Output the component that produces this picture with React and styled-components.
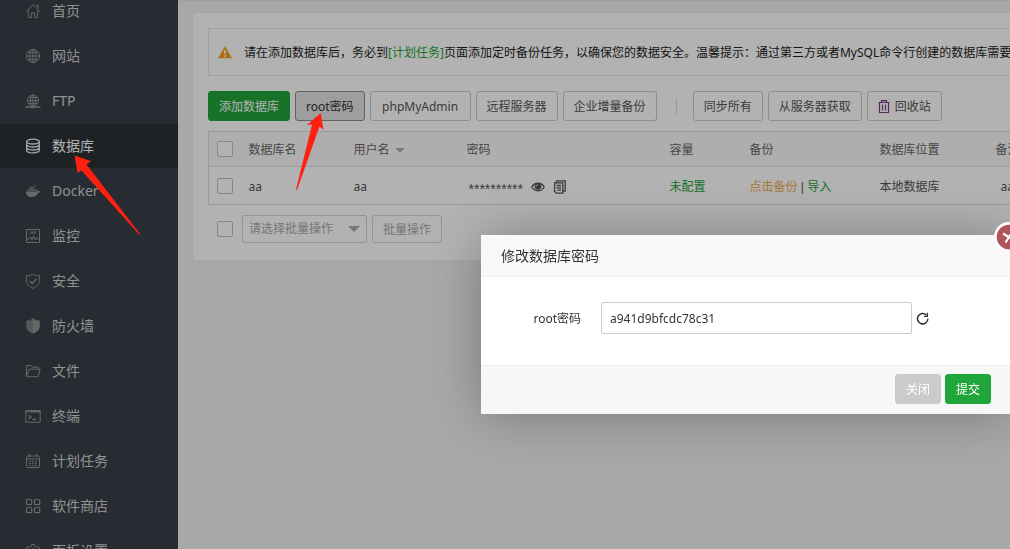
import React from 'react'
import styled, { createGlobalStyle, css } from 'styled-components'

const GlobalStyle = createGlobalStyle`
  * {
    box-sizing: border-box;
  }
  html, body, #root {
    height: 100%;
    margin: 0;
  }
  body {
    overflow: hidden;
    background: #f1f1f1;
    color: #555;
    font: 12px/18px "Noto Sans", "Noto Sans CJK SC", sans-serif;
  }
  button, input, select {
    font: inherit;
    color: inherit;
  }
  a {
    color: #20a53a;
    text-decoration: none;
  }
`

const Layout = styled.div`
  display: flex;
  height: 100%;
  overflow: hidden;
`

const Sidebar = styled.nav`
  flex: none;
  width: 178px;
  height: 100%;
  overflow: hidden;
  background: #393f48;
`

const Menu = styled.ul`
  display: flex;
  flex-direction: column;
  gap: 1px;
  margin: -11px 0 0;
  padding: 0;
  list-style: none;
`

const MenuLink = styled.a`
  display: flex;
  align-items: center;
  gap: 11px;
  height: 44px;
  padding-left: 25px;
  font-size: 14px;
  color: ${p => (p.$active ? '#fff' : '#d0d0d0')};
  background: ${p => (p.$active ? '#2d3136' : 'transparent')};
  svg {
    flex: none;
    width: 16px;
    height: 16px;
    color: ${p => (p.$active ? '#f0f0f0' : '#949494')};
  }
`

const Main = styled.main`
  flex: 1;
  min-width: 0;
  padding: 13px 15px;
  overflow: hidden;
  box-shadow: inset 0 1px 1px #e4e4e4;
`

const Panel = styled.section`
  width: 100%;
  min-width: 960px;
  padding: 15px;
  border-radius: 4px;
  background: #fff;
  box-shadow: 0 0 2px #e4e4e4;
`

const Notice = styled.p`
  display: flex;
  align-items: center;
  gap: 12px;
  height: 48px;
  margin: 0 0 15px;
  padding-left: 9px;
  border: 1px solid #eaeaea;
  color: #222;
  white-space: nowrap;
  span {
    padding-top: 2px;
  }
`

const Toolbar = styled.div`
  display: flex;
  align-items: center;
  gap: 5px;
  margin-bottom: 10px;
`

const Divider = styled.span`
  width: 1px;
  height: 16px;
  margin: 0 11px 0 14px;
  background: #ddd;
`

const variants = {
  normal: css`
    border-color: #ccc;
    background: #fff;
    color: #555;
  `,
  pressed: css`
    border-color: #8c8c8c;
    background: #e2e2e2;
    color: #333;
  `,
  primary: css`
    border-color: #20a53a;
    background: #20a53a;
    color: #fff;
  `,
  muted: css`
    border-color: #cbcbcb;
    background: #cbcbcb;
    color: #fff;
  `,
  disabled: css`
    border-color: #d4d4d4;
    background: #fff;
    color: #aaa;
  `,
}

const Button = styled.button`
  display: inline-flex;
  flex: none;
  align-items: center;
  justify-content: center;
  gap: 5px;
  min-width: ${p => (p.$wide ? '101px' : 0)};
  height: ${p => (p.$small ? 28 : 30)}px;
  padding: 2px 10px 0;
  border: 1px solid;
  border-radius: 3px;
  white-space: nowrap;
  ${p => variants[p.$variant || 'normal']}
`

const Table = styled.table`
  width: 100%;
  table-layout: fixed;
  border-collapse: collapse;
  border: 1px solid #ddd;
  th, td {
    padding: 2px 8px 0;
    font-weight: normal;
    text-align: left;
    white-space: nowrap;
    border-bottom: 1px solid #ddd;
  }
  th:first-child, td:first-child {
    padding-top: 0;
  }
  th {
    height: 35px;
    background: #f9f9f9;
    color: #666;
  }
  td {
    height: 38px;
  }
`

const Check = styled.input.attrs({ type: 'checkbox' })`
  display: block;
  flex: none;
  width: 16px;
  height: 16px;
  margin: 0;
  appearance: none;
  border: 1px solid #c0c0c0;
  border-radius: 2px;
  background: #fff;
`

const Caret = styled.span`
  display: inline-block;
  margin-left: 5px;
  vertical-align: middle;
  border: 5px solid transparent;
  border-top-color: #b4b4b4;
  border-bottom: 0;
`

const Password = styled.span`
  display: flex;
  align-items: center;
  gap: 8px;
  padding-left: 2px;
`

const Stars = styled.span`
  padding-top: 5px;
  font-family: "Liberation Sans", sans-serif;
  font-size: 14px;
`

const IconButton = styled.button`
  display: inline-flex;
  padding: 0;
  border: 0;
  background: none;
`

const BackupLink = styled.a`
  color: #f0ad4e;
`

const Separator = styled.span`
  font-family: "Liberation Sans", sans-serif;
`

const Remark = styled.span`
  padding-left: 5px;
`

const Batch = styled.div`
  display: flex;
  align-items: center;
  gap: 5px;
  padding: 10px 0 2px 9px;
`

const SelectBox = styled.div`
  position: relative;
  margin-left: 4px;
  &::after {
    content: '';
    position: absolute;
    top: 11px;
    right: 7px;
    border: 6px solid transparent;
    border-top-color: #aaa;
    border-bottom: 0;
    pointer-events: none;
  }
  select {
    width: 125px;
    height: 28px;
    padding: 0 6px;
    appearance: none;
    border: 1px solid #d4d4d4;
    border-radius: 2px;
    background: #fff;
    color: #aaa;
  }
`

const Shade = styled.div`
  position: fixed;
  inset: 0;
  background: rgba(0, 0, 0, 0.3);
`

const Dialog = styled.div`
  position: fixed;
  top: 235px;
  left: 481px;
  width: 530px;
  background: #fff;
  color: #333;
  box-shadow: 1px 1px 50px rgba(0, 0, 0, 0.3);
`

const DialogTitle = styled.h2`
  height: 42px;
  margin: 0;
  padding: 0 20px;
  border-bottom: 1px solid #eee;
  background: #f8f8f8;
  font-size: 14px;
  font-weight: normal;
  line-height: 42px;
`

const Field = styled.div`
  display: flex;
  align-items: center;
  padding: 25px 82px 31px 0;
  label {
    width: 100px;
    margin-right: 20px;
    padding-top: 2px;
    text-align: right;
  }
  input {
    flex: 1;
    min-width: 0;
    height: 32px;
    margin-right: 4px;
    padding: 0 8px;
    border: 1px solid #ccc;
    border-radius: 2px;
    background: #fff;
  }
`

const DialogFooter = styled.div`
  display: flex;
  justify-content: flex-end;
  gap: 4px;
  padding: 8px 20px 10px;
  border-top: 1px solid #edf1f2;
  background: #f6f8f8;
`

const CloseButton = styled.button`
  position: absolute;
  top: -13px;
  right: -13px;
  display: flex;
  width: 30px;
  height: 30px;
  padding: 0;
  border: 0;
  border-radius: 50%;
  background: #fff;
`

const Arrows = styled.svg`
  position: fixed;
  top: 0;
  left: 0;
  fill: #ff2012;
  pointer-events: none;
`

const Icon = ({ children }) => (
  <svg viewBox="0 0 16 16" fill="none" stroke="currentColor" strokeWidth="1" aria-hidden="true">
    {children}
  </svg>
)

const icons = {
  home: (
    <Icon>
      <path d="M1 8.6 8 1.8 15 8.6M3.3 7.2v7.3h3V10h3.4v4.5h3V7.2M11.2 2.3h2v3.2" />
    </Icon>
  ),
  site: (
    <Icon>
      <circle cx="8" cy="8" r="6.5" />
      <ellipse cx="8" cy="8" rx="3.2" ry="6.5" />
      <path d="M8 1.5v13M1.5 8h13M2.6 4.6h10.8M2.6 11.4h10.8" />
    </Icon>
  ),
  ftp: (
    <Icon>
      <circle cx="8" cy="7.5" r="5.5" />
      <ellipse cx="8" cy="7.5" rx="2.6" ry="5.5" />
      <path d="M8 2v11M2.5 7.5h11M3.5 4.6h9M3.5 10.4h9" />
      <path d="M.5 14h15M6 14.5h4" strokeWidth="1.4" />
    </Icon>
  ),
  database: (
    <Icon>
      <g strokeWidth="1.3">
        <ellipse cx="8" cy="3.6" rx="6.3" ry="2.4" />
        <path d="M1.7 3.6v8.8c0 1.3 2.8 2.4 6.3 2.4s6.3-1.1 6.3-2.4V3.6M1.7 6.6C1.7 7.9 4.5 9 8 9s6.300-1.100 6.300-2.400M1.700 9.600C1.700 10.900 4.500 12 8 12s6.300-1.100 6.300-2.400" />
      </g>
    </Icon>
  ),
  docker: (
    <Icon>
      <g fill="currentColor" stroke="none">
        <path d="M1 8.500h10.500c.6-.3.800-1 .600-2 .8.400 1.200 1 1.200 1.700.8-.2 1.600-.1 2.400.2-.5 1-1.400 1.300-2.500 1.300C12 12.500 10 14 6.500 14 3 14 1 12.200 1 8.500z" />
        <path d="M2.500 6H4.300v1.800H2.500zM4.900 6h1.800v1.800H4.900zM7.300 6h1.800v1.800H7.300zM9.700 6h1.600v1.800H9.700zM4.900 3.800h1.800v1.600H4.900zM7.300 3.800h1.800v1.600H7.300zM9 2.200h1.400v1.200H9z" />
      </g>
    </Icon>
  ),
  monitor: (
    <Icon>
      <path d="M1.500 1.500h13v13h-13zM1.500 11h2.700l1.300-2.200 1.600 3.400L8.700 7.800l1.600 4.200 1.500-2.500.8 1.500h1.900" />
      <path d="M5 4.500h6" strokeWidth="2.500" opacity=".6" />
    </Icon>
  ),
  safe: (
    <Icon>
      <path d="M8 .9c1.700 1.200 4 1.800 6.400 1.800v5.600c0 3-2.600 5.300-6.400 7-3.800-1.700-6.400-4-6.400-7V2.700C4 2.700 6.300 2.100 8 .9z" />
      <path d="m4.600 7.900 2.600 2.500 4.300-4.700" strokeWidth="1.400" />
    </Icon>
  ),
  firewall: (
    <Icon>
      <g fill="currentColor" stroke="none">
        <path d="M8 .5v15.200C4 14 1.200 11.600 1.200 8V2.800h1.500V2h1.500v.8h1.500v-1.500h1.300V.5z" opacity=".75" />
        <path d="M8 .5v15.200c4-1.700 6.800-4.100 6.800-7.700V2.800h-1.500V2h-1.500v.8h-1.500v-1.500H9V.5z" />
      </g>
    </Icon>
  ),
  folder: (
    <Icon>
      <path d="M1.500 13.700V2.500h4.300l1.400 1.700h6.300v2M1.500 13.700h11.500l2.200-7.500H4.200z" strokeLinejoin="round" />
    </Icon>
  ),
  terminal: (
    <Icon>
      <path d="M.8 2.500h14.400v11.700H.8z" />
      <path d="M3.500 7.200l2.500 1.900-2.500 1.900M7.300 11.300h3.700" strokeWidth="1.300" />
      <path d="M.8 3.300h14.400" strokeWidth="2.400" strokeDasharray="1.500 .8 1.200 .8 20" />
    </Icon>
  ),
  calendar: (
    <Icon>
      <rect x="1.500" y="3" width="13" height="11.500" rx="1.500" />
      <path d="M1.500 6h13M4.500 1v3M11.500 1v3" />
      <path d="M4 8.500h8.500M4 10.500h8.500M4 12.500h8.500" strokeDasharray="1.800 1.200" />
    </Icon>
  ),
  store: (
    <Icon>
      <g strokeWidth="1.200">
        <rect x="1.500" y="1.500" width="5.200" height="5.200" rx="1" />
        <rect x="9.500" y="1.500" width="5.200" height="5.200" rx="1" />
        <rect x="1.500" y="9.500" width="5.200" height="5.200" rx="1" />
        <rect x="9.500" y="9.500" width="5.200" height="5.200" rx="1" />
      </g>
    </Icon>
  ),
  settings: (
    <Icon>
      <path d="M6.600 1.500h2.800l.5 2 1.500.8 2-.6 1.300 2.400-1.400 1.500v1.400l1.400 1.500-1.300 2.400-2-.6-1.500.8-.5 2H6.600l-.5-2-1.500-.8-2 .6-1.300-2.400L2.700 9V7.600L1.300 6.100l1.300-2.400 2 .6 1.500-.8z" />
      <circle cx="8" cy="8.200" r="2.400" />
    </Icon>
  ),
}

const menu = [
  ['home', '首页'],
  ['site', '网站'],
  ['ftp', 'FTP'],
  ['database', '数据库'],
  ['docker', 'Docker'],
  ['monitor', '监控'],
  ['safe', '安全'],
  ['firewall', '防火墙'],
  ['folder', '文件'],
  ['terminal', '终端'],
  ['calendar', '计划任务'],
  ['store', '软件商店'],
  ['settings', '面板设置'],
]

const columns = [32, 105, 113, 203, 80, 130, 116, null]

const Databases = () => (
  <Panel>
    <Notice>
      <svg width="14" height="13" viewBox="0 0 14 13" aria-hidden="true">
        <path d="M7 0 14 12.200H0z" fill="#f5a119" />
        <path d="M6 4.200h2L7.700 8.300H6.300zM6.100 9.200h1.800v1.700H6.100z" fill="#fff" />
      </svg>
      <span>
        请在添加数据库后，务必到<a href="#crontab">[计划任务]</a>页面添加定时备份任务，以确保您的数据安全。温馨提示：通过第三方或者MySQL命令行创建的数据库需要
      </span>
    </Notice>
    <Toolbar>
      <Button $variant="primary">添加数据库</Button>
      <Button $variant="pressed">root密码</Button>
      <Button $wide>phpMyAdmin</Button>
      <Button>远程服务器</Button>
      <Button>企业增量备份</Button>
      <Divider />
      <Button>同步所有</Button>
      <Button>从服务器获取</Button>
      <Button>
        <svg width="12" height="14" viewBox="0 0 12 14" fill="none" stroke="#7a3a80" aria-hidden="true">
          <path d="M.5 2.500h11M3.500 2.500V.6h5v1.900M1.500 2.500v10h9v-10M4.500 4.500v6M7.500 4.500v6" strokeWidth="1.200" />
        </svg>
        回收站
      </Button>
    </Toolbar>
    <Table>
      <colgroup>
        {columns.map((width, i) => <col key={i} width={width || undefined} />)}
      </colgroup>
      <thead>
        <tr>
          <th><Check aria-label="全选" /></th>
          <th>数据库名</th>
          <th>用户名<Caret /></th>
          <th>密码</th>
          <th>容量</th>
          <th>备份</th>
          <th>数据库位置</th>
          <th>备注</th>
        </tr>
      </thead>
      <tbody>
        <tr>
          <td><Check aria-label="aa" /></td>
          <td>aa</td>
          <td>aa</td>
          <td>
            <Password>
              <Stars>**********</Stars>
              <IconButton aria-label="显示密码">
                <svg width="14" height="12" viewBox="0 0 14 12" aria-hidden="true">
                  <path d="M.8 6C3.500 1 10.500 1 13.200 6 10.500 11 3.500 11 .8 6z" fill="none" stroke="#555" strokeWidth="1.300" />
                  <circle cx="7" cy="5.500" r="3.300" fill="#555" />
                  <path d="M5.200 5.500c0-1 .7-1.800 1.800-1.800" fill="none" stroke="#fff" strokeWidth=".8" />
                </svg>
              </IconButton>
              <IconButton aria-label="复制密码">
                <svg width="14" height="14" viewBox="0 0 14 14" fill="none" stroke="#555" strokeWidth="1.300" aria-hidden="true">
                  <path d="M3.500 2.800V.8h8.700v10.400h-2M1.600 2.800h8.200v10.400H3.400l-1.800-1.800zM3.500 5.500h4.500M3.500 7.800h4.500M4.500 10.200H8" />
                </svg>
              </IconButton>
            </Password>
          </td>
          <td><a href="#quota">未配置</a></td>
          <td>
            <BackupLink href="#backup">点击备份</BackupLink>
            <Separator> | </Separator>
            <a href="#import">导入</a>
          </td>
          <td>本地数据库</td>
          <td><Remark>aa</Remark></td>
        </tr>
      </tbody>
    </Table>
    <Batch>
      <Check aria-label="批量选择" />
      <SelectBox>
        <select aria-label="批量操作">
          <option>请选择批量操作</option>
        </select>
      </SelectBox>
      <Button $variant="disabled" $small>批量操作</Button>
    </Batch>
  </Panel>
)

const PasswordDialog = () => (
  <Dialog role="dialog" aria-labelledby="dialog-title">
    <DialogTitle id="dialog-title">修改数据库密码</DialogTitle>
    <Field>
      <label htmlFor="root-password">root密码</label>
      <input id="root-password" defaultValue="a941d9bfcdc78c31" />
      <IconButton aria-label="随机密码">
        <svg width="13" height="13" viewBox="0 0 13 13" fill="none" stroke="#333" strokeWidth="1.500" aria-hidden="true">
          <path d="M10.300 2.900A5.200 5.200 0 1 0 11.900 6.800" />
          <path d="M11.400.8v3.500H8" strokeWidth="1.300" />
        </svg>
      </IconButton>
    </Field>
    <DialogFooter>
      <Button $variant="muted">关闭</Button>
      <Button $variant="primary">提交</Button>
    </DialogFooter>
    <CloseButton aria-label="关闭窗口">
      <svg width="30" height="30" viewBox="0 0 30 30" aria-hidden="true">
        <circle cx="15" cy="15" r="12.300" fill="#ae545a" />
        <path d="M9 11.500 20.500 18.500M11.500 20.500 18.500 9.500" stroke="#fff" strokeWidth="2.200" />
      </svg>
    </CloseButton>
  </Dialog>
)

export default function App() {
  return (
    <>
      <GlobalStyle />
      <Layout>
        <Sidebar>
          <Menu>
            {menu.map(([key, label]) => (
              <li key={key}>
                <MenuLink href={`#${key}`} $active={key === 'database'}>
                  {icons[key]}
                  {label}
                </MenuLink>
              </li>
            ))}
          </Menu>
        </Sidebar>
        <Main>
          <Databases />
        </Main>
      </Layout>
      <Shade />
      <PasswordDialog />
      <Arrows width="340" height="240" viewBox="0 0 340 240" aria-hidden="true">
        <path d="M74.500 155.500 91 161l-4.500 3.500L140.300 234.300l-.8.700L81.500 170.500 77.500 173z" />
        <path d="M320.700 113 323.500 130l-4-3.500L297 190l-1-.5L312 124.500l-5 .5z" />
      </Arrows>
    </>
  )
}
